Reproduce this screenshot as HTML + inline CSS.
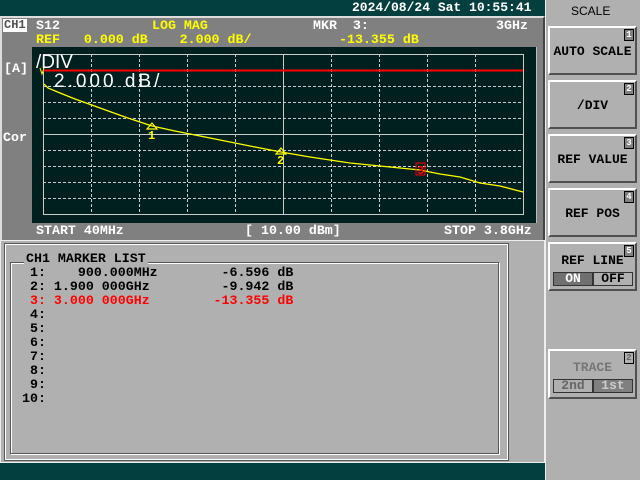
<!DOCTYPE html>
<html><head><style>
*{margin:0;padding:0;box-sizing:border-box}
body{width:640px;height:480px;background:#033f3f;position:relative;overflow:hidden;font-family:"Liberation Mono",monospace;font-weight:bold;font-size:13.3px}
.a{position:absolute;white-space:pre;line-height:13px}
.y{color:#ffff00}.w{color:#fff}.k{color:#000}.r{color:#ff0000}
.btn{position:absolute;left:548px;width:89px;height:49px;background:#b0b0b0;border:2px solid;border-color:#fff #505050 #505050 #fff;color:#000;text-align:center;font-size:13px}
.btn .n{position:absolute;right:1px;top:1px;font-size:9px;line-height:10px;border:1px solid #000;background:#808080;color:#fff;width:10px;height:12px}
.btn .t{position:absolute;left:0;right:0;top:16px}
</style></head><body>
<div class="a w" style="left:352px;top:1px;font-size:13px">2024/08/24 Sat 10:55:41</div>
<div style="position:absolute;left:0;top:16px;width:545px;height:224px;background:#808080;border-top:2px solid #ddd;border-left:2px solid #ddd;border-right:2px solid #444"></div>
<div class="a" style="left:3px;top:19px;background:#fff;color:#505050;padding:0 1px;font-size:12px">CH1</div>
<div class="a w" style="left:36px;top:19px">S12</div>
<div class="a y" style="left:152px;top:19px">LOG MAG</div>
<div class="a w" style="left:313px;top:19px">MKR  3:</div>
<div class="a w" style="left:496px;top:19px">3GHz</div>
<div class="a y" style="left:36px;top:33px">REF   0.000 dB    2.000 dB/</div>
<div class="a y" style="left:339px;top:33px">-13.355 dB</div>
<div class="a w" style="left:4px;top:62px">[A]</div>
<div class="a w" style="left:3px;top:131px">Cor</div>
<div style="position:absolute;left:32px;top:47px;width:505px;height:176px;background:#001f1f;border-right:1px solid #bbb"></div>
<svg style="position:absolute;left:0;top:0" width="640" height="480">
<g stroke="#ccc" stroke-width="1" stroke-dasharray="3,2" fill="none">
<path d="M91.5 54V214M139.5 54V214M187.5 54V214M235.5 54V214M331.5 54V214M379.5 54V214M427.5 54V214M475.5 54V214"/>
<path d="M43 86.5H523M43 102.5H523M43 118.5H523M43 150.5H523M43 166.5H523M43 182.5H523M43 198.5H523"/>
</g>
<g stroke="#ccc" fill="none"><rect x="43.5" y="54.5" width="480" height="160"/><path d="M43 134.5H523M283.5 54V214"/></g>
<path d="M43 70.5H523" stroke="#ff0000" stroke-width="2"/>
<polyline fill="none" stroke="#ffff00" stroke-width="1.3" points="44,84 48,88 60,93 75,99 100,108 125,117 152,126 175,131 200,136 225,141 255,147 281,152 310,157 350,163 380,166 400,168 420,170 440,174 460,177 480,183 500,186 523,192"/>
<g fill="none" stroke="#ffff00" stroke-width="1.2"><path d="M147 129L152 123 157 129Z"/><path d="M276 154L281 148 286 154Z"/></g>
<text x="148" y="139" fill="#ffff00" font-family="Liberation Mono" font-weight="bold" font-size="12">1</text>
<text x="277" y="164" fill="#ffff00" font-family="Liberation Mono" font-weight="bold" font-size="12">2</text>
<rect x="416" y="163" width="9" height="12" fill="none" stroke="#ff0000"/>
<text x="417" y="174" fill="#ff0000" font-family="Liberation Mono" font-weight="bold" font-size="12">3</text>
<path d="M40 68L42 74 44 68" fill="none" stroke="#ffff00"/>
</svg>
<div class="a w" style="left:36px;top:53px;font-size:19px;font-weight:normal;font-family:'Liberation Sans',sans-serif;line-height:19px">/DIV</div>
<div class="a w" style="left:54px;top:72px;font-size:19px;font-weight:normal;font-family:'Liberation Sans',sans-serif;line-height:19px;letter-spacing:3px">2.000 dB/</div>
<div class="a w" style="left:36px;top:224px">START 40MHz</div>
<div class="a w" style="left:245px;top:224px">[ 10.00 dBm]</div>
<div class="a w" style="left:444px;top:224px">STOP 3.8GHz</div>
<div style="position:absolute;left:0;top:240px;width:545px;height:223px;background:#b0b0b0;border:1px solid #eee"></div>
<div style="position:absolute;left:5px;top:244px;width:503px;height:216px;border:1px solid #fff;outline:1px solid #555"></div>
<div style="position:absolute;left:10px;top:262px;width:489px;height:192px;border:1px solid #555;box-shadow:inset 1px 1px 0 #fff, 1px 1px 0 #fff"></div>
<div class="a k" style="left:24px;top:252px;background:#b0b0b0;padding:0 2px">CH1 MARKER LIST</div>
<div class="a k" style="left:22px;top:266px;line-height:14px"> 1:    900.000MHz        -6.596 dB
 2: 1.900 000GHz         -9.942 dB
<span class="r"> 3: 3.000 000GHz        -13.355 dB</span>
 4:
 5:
 6:
 7:
 8:
 9:
10:</div>
<div style="position:absolute;left:545px;top:0;width:95px;height:480px;background:#b0b0b0;border-left:1px solid #eee"></div>
<div class="a k" style="left:571px;top:5px;font-weight:normal;font-family:'Liberation Sans',sans-serif;font-size:12px">SCALE</div>
<div class="btn" style="top:26px"><span class="n">1</span><span class="t">AUTO SCALE</span></div>
<div class="btn" style="top:80px"><span class="n">2</span><span class="t">/DIV</span></div>
<div class="btn" style="top:134px"><span class="n">3</span><span class="t">REF VALUE</span></div>
<div class="btn" style="top:188px"><span class="n">4</span><span class="t">REF POS</span></div>
<div class="btn" style="top:242px"><span class="n">5</span><span class="t" style="top:9px">REF LINE</span>
<div style="position:absolute;left:3px;top:28px;width:40px;height:14px;background:#707070;color:#fff;border:1px solid #333;line-height:12px">ON</div>
<div style="position:absolute;left:43px;top:28px;width:40px;height:14px;background:#b0b0b0;color:#000;border:1px solid #333;line-height:12px">OFF</div></div>
<div class="btn" style="top:349px;height:50px"><span class="n" style="background:#b0b0b0;color:#666">2</span><span class="t" style="top:9px;color:#777">TRACE</span>
<div style="position:absolute;left:3px;top:28px;width:40px;height:14px;background:#b0b0b0;color:#666;border:1px solid #333;line-height:12px">2nd</div>
<div style="position:absolute;left:43px;top:28px;width:40px;height:14px;background:#808080;color:#ccc;border:1px solid #333;line-height:12px">1st</div></div>
</body></html>
